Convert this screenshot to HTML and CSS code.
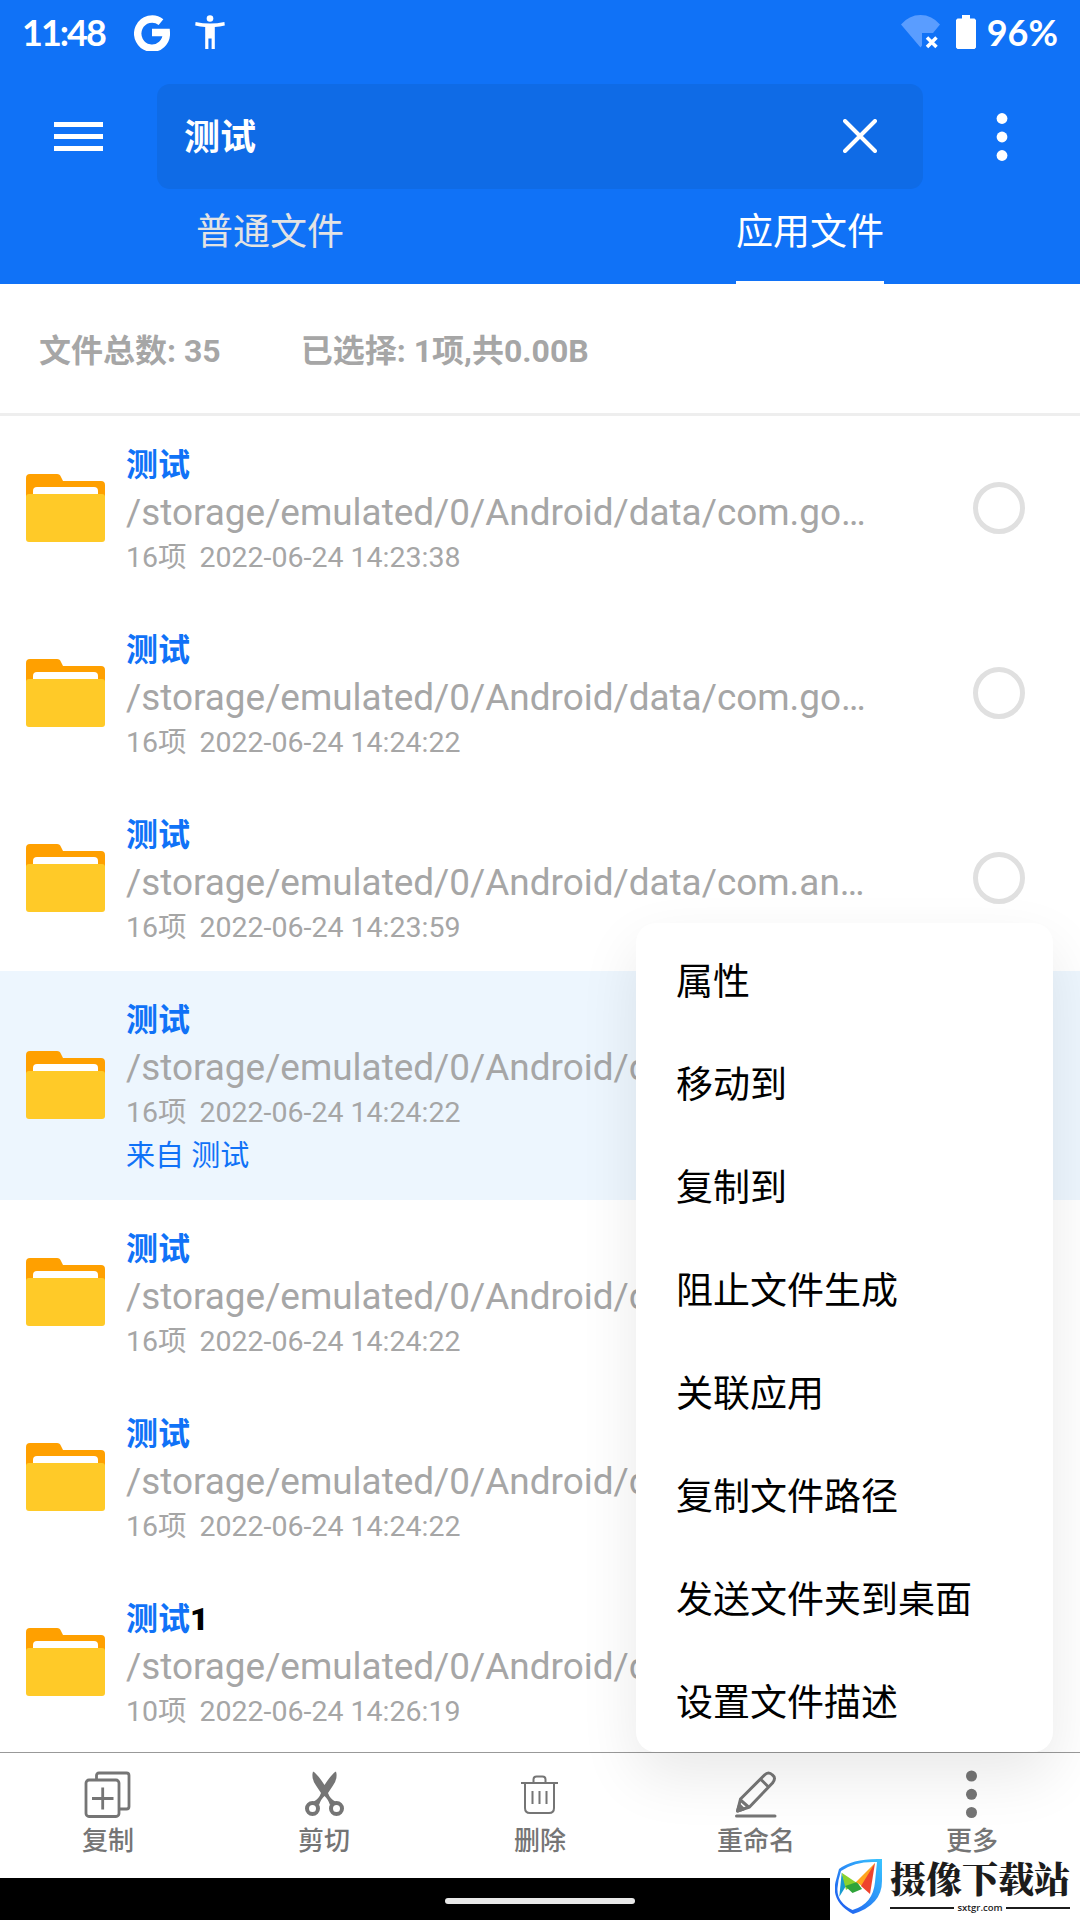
FILE: index.html
```
<!DOCTYPE html>
<html lang="zh-CN">

    <head>

        <meta charset="UTF-8">
        <meta name="viewport" content="width=device-width, initial-scale=1.0">
        <title>文件搜索</title>

        <link rel="stylesheet" href="styles.css">

    </head>

    <body>

        <!-- icon shared by every row -->
        <svg class="sprite">
            <symbol id="folder" viewBox="0 0 79 68">
                <path fill="#ffa000" d="M0 4a4 4 0 0 1 4-4h27q3 0 4 3l2 4h38a4 4 0 0 1 4 4v20H0z"/>
                <path fill="#fff" d="M7 24v-7q0-4 4-4h57q4 0 4 4v7z"/>
                <rect y="20" width="79" height="48" rx="3" fill="#ffca28"/>
            </symbol>
        </svg>

        <header class="app-header">

            <div class="status-bar">
                <span class="time">11:48</span>
                <svg class="google" viewBox="0 0 36 37"><path d="M27 8.2A14.3 14.6 0 1 0 32.3 18.5H18" fill="none" stroke="#fff" stroke-width="7.4"/></svg>
                <svg class="person" viewBox="0 0 30 34" fill="#fff"><circle cx="15" cy="3.5" r="3.3"/><path d="M.6 7q14.4 3 28.8 0l.4 3.400q-5 1.200-10 1.500V34h-3.200V23.500h-3.200V34h-3.200V11.900q-5-.3-10-1.500z"/></svg>
                <div class="status-right">
                    <svg class="wifi" viewBox="0 0 39 34"><path fill="#5a9dff" d="M0 9.5Q8 0 19.500 0T39 9.500l-7 8.500H21v12.500L19.500 32.500z"/><path d="M26 22.500l9.500 9.500m0-9.500L26 32" stroke="#fff" stroke-width="3.500"/></svg>
                    <svg class="battery" viewBox="0 0 20 34" fill="#fff"><path d="M6 0h8v3.500h4.500l1.500 1.500v27.500l-1.500 1.500h-17L0 32.500V5l1.500-1.500H6z"/></svg>
                    <span class="percent">96%</span>
                </div>
            </div>

            <div class="search-bar">
                <svg class="menu-icon" viewBox="0 0 49 29" fill="#fff"><path d="M0 0h49v5H0zM0 12h49v5H0zM0 24h49v5H0z"/></svg>
                <div class="search-box">
                    <span>测试</span>
                    <svg class="clear" viewBox="0 0 34 34"><path d="M2 2l30 30M32 2L2 32" stroke="#fff" stroke-width="4" stroke-linecap="round"/></svg>
                </div>
                <svg class="dots" viewBox="0 0 12 48" fill="#fff"><circle cx="6" cy="5.500" r="5.400"/><circle cx="6" cy="24" r="5.400"/><circle cx="6" cy="42.500" r="5.400"/></svg>
            </div>

            <nav class="tabs">
                <div class="tab"><span>普通文件</span></div>
                <div class="tab active"><span>应用文件</span></div>
            </nav>

        </header>

        <section class="summary">
            <span>文件总数: 35</span>
            <span>已选择: 1项,共0.00B</span>
        </section>

        <main class="file-list">

            <article class="file">
                <svg class="folder"><use href="#folder"/></svg>
                <div class="info">
                    <h2>测试</h2>
                    <p class="path">/storage/emulated/0/Android/data/com.go…</p>
                    <p class="meta"><span>16项</span><span>2022-06-24 14:23:38</span></p>
                </div>
                <i class="check"></i>
            </article>

            <article class="file">
                <svg class="folder"><use href="#folder"/></svg>
                <div class="info">
                    <h2>测试</h2>
                    <p class="path">/storage/emulated/0/Android/data/com.go…</p>
                    <p class="meta"><span>16项</span><span>2022-06-24 14:24:22</span></p>
                </div>
                <i class="check"></i>
            </article>

            <article class="file">
                <svg class="folder"><use href="#folder"/></svg>
                <div class="info">
                    <h2>测试</h2>
                    <p class="path">/storage/emulated/0/Android/data/com.an…</p>
                    <p class="meta"><span>16项</span><span>2022-06-24 14:23:59</span></p>
                </div>
                <i class="check"></i>
            </article>

            <article class="file selected">
                <svg class="folder"><use href="#folder"/></svg>
                <div class="info">
                    <h2>测试</h2>
                    <p class="path">/storage/emulated/0/Android/d</p>
                    <p class="meta"><span>16项</span><span>2022-06-24 14:24:22</span></p>
                    <p class="source">来自 测试</p>
                </div>
            </article>

            <article class="file">
                <svg class="folder"><use href="#folder"/></svg>
                <div class="info">
                    <h2>测试</h2>
                    <p class="path">/storage/emulated/0/Android/d</p>
                    <p class="meta"><span>16项</span><span>2022-06-24 14:24:22</span></p>
                </div>
            </article>

            <article class="file">
                <svg class="folder"><use href="#folder"/></svg>
                <div class="info">
                    <h2>测试</h2>
                    <p class="path">/storage/emulated/0/Android/d</p>
                    <p class="meta"><span>16项</span><span>2022-06-24 14:24:22</span></p>
                </div>
            </article>

            <article class="file">
                <svg class="folder"><use href="#folder"/></svg>
                <div class="info">
                    <h2>测试<b>1</b></h2>
                    <p class="path">/storage/emulated/0/Android/d</p>
                    <p class="meta"><span>10项</span><span>2022-06-24 14:26:19</span></p>
                </div>
            </article>

        </main>

        <footer class="toolbar">
            <div class="tool">
                <svg viewBox="0 0 48 48" fill="none" stroke="#757575" stroke-width="2.800"><rect x="2" y="10" width="33" height="36.500" rx="3"/><path d="M12.500 9V5.500q0-2.500 2.500-2.500h27.500Q45 3 45 5.500v31q0 2.500-2.500 2.500H36M8 28.500h21.500M18.700 17.500v22"/></svg>
                <span>复制</span>
            </div>
            <div class="tool">
                <svg viewBox="0 0 48 48" fill="none" stroke="#757575"><path fill="#757575" stroke="none" d="M13 1.500q4 2 11.500 13.500Q32 3.500 36 1.500q2 7-3 14l-5 7.500q2 6 8 9l-6 3q-2-6-5.500-9-3.500 3-5.500 9l-6-3q6-3 8-9l-5-7.500q-5-7-3-14z"/><circle cx="12.500" cy="38.500" r="5.500" stroke-width="4"/><circle cx="36.500" cy="38.500" r="5.500" stroke-width="4"/></svg>
                <span>剪切</span>
            </div>
            <div class="tool">
                <svg viewBox="0 0 48 48" fill="none" stroke="#757575" stroke-width="2"><path d="M5 13h37M9 13v25q0 5 5 5h19q5 0 5-5V13M17.500 13V9.500q0-3 3-3h6q3 0 3 3V13M16.500 21v13M23.500 21v13M30.500 21v13"/></svg>
                <span>删除</span>
            </div>
            <div class="tool">
                <svg viewBox="0 0 48 48" fill="none" stroke="#757575" stroke-width="3" stroke-linejoin="round"><path d="M5.500 41l3-12L32.500 5q4-4 8 0 4 3 0 8L17.500 37zM28.500 9l8 8M8.500 30l8 7"/><path d="M5.500 41l2-6 4 4z" fill="#757575"/><path d="M4.500 46h38.500" stroke-linecap="round"/></svg>
                <span>重命名</span>
            </div>
            <div class="tool">
                <svg viewBox="0 0 48 48" fill="#757575"><circle cx="23.500" cy="6" r="5.500"/><circle cx="23.500" cy="24.300" r="5.500"/><circle cx="23.500" cy="42.500" r="5.500"/></svg>
                <span>更多</span>
            </div>
        </footer>

        <div class="nav-bar"><i></i></div>

        <ul class="popup">
            <li>属性</li>
            <li>移动到</li>
            <li>复制到</li>
            <li>阻止文件生成</li>
            <li>关联应用</li>
            <li>复制文件路径</li>
            <li>发送文件夹到桌面</li>
            <li>设置文件描述</li>
        </ul>

        <div class="site-mark">
            <svg viewBox="0 0 48 58">
                <defs><linearGradient id="edge" x1="1" y1="0" x2="0" y2="1"><stop offset="0" stop-color="#39c5ff"/><stop offset="1" stop-color="#1c55ee"/></linearGradient></defs>
                <path fill="url(#edge)" fill-rule="evenodd" d="M4 11Q18 0 47 1v22q0 24-29 33Q-4 44 .5 24zM6 13Q3 22 2.500 30q-1 14 15 22Q38 46 40 24L42 4Q20 3 6 13z"/>
                <path fill="#189bd0" d="M6.700 14.700L11 28 4.300 38.700z"/>
                <path fill="#8bd32d" d="M6.700 14.700L22 25 11 32z"/>
                <path fill="#2fa43a" d="M10 28l12-4 5 7-9.500 4z"/>
                <path fill="#ffa51e" d="M21 24L40 5 30 30z"/>
                <path fill="#ee432d" d="M40 5l-5 31-9-8z"/>
            </svg>
            <div class="mark-text">
                <strong>摄像下载站</strong>
                <small>sxtgr.com</small>
            </div>
        </div>

    </body>

</html>
```
FILE: styles.css
```
*
    {
        margin: 0;
        padding: 0;
        box-sizing: border-box;
    }

body
    {
        position: relative;
        width: 1080px;
        height: 1920px;
        overflow: hidden;
        display: flex;
        flex-direction: column;
        background-color: #fff;
        font-family: Roboto, 'Noto Sans CJK SC', sans-serif;
    }

svg
    {
        display: block;
        flex: none;
    }

.sprite
    {
        display: none;
    }

.app-header
    {
        height: 284px;
        background-color: #1072f7;
        color: #fff;
    }

.status-bar
    {
        display: flex;
        align-items: center;
        height: 64px;
        padding: 0 22px;
        font: bold 36px/36px Lato, sans-serif;
    }

.time
    {
        width: 112px;
        letter-spacing: -2px;
    }

.google
    {
        width: 36px;
        height: 37px;
    }

.person
    {
        width: 30px;
        height: 34px;
        margin-left: 25px;
    }

.status-right
    {
        display: flex;
        align-items: center;
        margin-left: auto;
    }

.wifi
    {
        width: 39px;
        height: 34px;
    }

.battery
    {
        width: 20px;
        height: 34px;
        margin: 0 11px 0 16px;
    }

.search-bar
    {
        display: flex;
        align-items: center;
        height: 105px;
        margin-top: 20px;
        padding-left: 54px;
    }

.menu-icon
    {
        width: 49px;
        height: 29px;
        margin-right: 54px;
    }

.search-box
    {
        display: flex;
        align-items: center;
        justify-content: space-between;
        width: 766px;
        height: 105px;
        padding: 0 46px 2px 27px;
        border-radius: 13px;
        background-color: #0f6be6;
        font-size: 36px;
        font-weight: 700;
    }

.search-box span
    {
        padding-bottom: 4px;
    }

.clear
    {
        width: 34px;
        height: 34px;
    }

.dots
    {
        width: 12px;
        height: 48px;
        margin-left: 73px;
    }

.tabs
    {
        display: flex;
        height: 95px;
    }

.tab
    {
        display: flex;
        justify-content: center;
        flex: 1;
        color: #e3e3e3;
        font-size: 37px;
        line-height: 88px;
    }

.tab span
    {
        height: 95px;
    }

.tab.active
    {
        color: #fff;
    }

.tab.active span
    {
        border-bottom: 3px solid #fff;
    }

.summary
    {
        display: flex;
        align-items: center;
        gap: 80px;
        height: 132px;
        padding: 0 0 2px 39px;
        border-bottom: 3px solid #eee;
        color: #a6a6a6;
        font-size: 32px;
        font-weight: 700;
    }

.file-list
    {
        height: 1336px;
        overflow: hidden;
    }

.file
    {
        display: flex;
        align-items: center;
        height: 185px;
        padding: 0 55px 2px 26px;
    }

.file.selected
    {
        height: 229px;
        background-color: #edf6fe;
    }

.folder
    {
        width: 79px;
        height: 68px;
    }

.info
    {
        flex: 1;
        margin-left: 21px;
        padding-top: 5px;
        color: #a6a6a6;
        white-space: nowrap;
    }

.info h2
    {
        color: #1072f7;
        font-size: 32px;
        font-weight: 700;
        line-height: 47px;
    }

.info b
    {
        color: #000;
    }

.path
    {
        font-size: 36.9px;
        line-height: 48px;
    }

.meta
    {
        display: flex;
        gap: 13px;
        font-size: 28.5px;
        line-height: 42px;
    }

.source
    {
        color: #1072f7;
        font-size: 29px;
        line-height: 44px;
    }

.check
    {
        width: 52px;
        height: 52px;
        border: 5px solid #e0e0e0;
        border-radius: 50%;
    }

.toolbar
    {
        display: flex;
        height: 126px;
        border-top: 1px solid #999;
    }

.tool
    {
        display: flex;
        flex-direction: column;
        align-items: center;
        flex: 1;
        padding-top: 17px;
        color: #757575;
        font-size: 26px;
        font-weight: 500;
        line-height: 30px;
    }

.tool svg
    {
        width: 48px;
        height: 48px;
        margin-bottom: 8px;
    }

.nav-bar
    {
        display: flex;
        align-items: center;
        justify-content: center;
        height: 42px;
        padding-top: 3px;
        background-color: #000;
    }

.nav-bar i
    {
        width: 190px;
        height: 6px;
        border-radius: 3px;
        background-color: #e8e8e8;
    }

/* menu opened from the last toolbar button */
.popup
    {
        position: absolute;
        left: 636px;
        top: 923px;
        width: 417px;
        height: 829px;
        padding: 8px 0 0 40px;
        border-radius: 20px;
        background-color: #fff;
        box-shadow: 0 24px 60px rgba(0, 0, 0, 0.09);
        list-style: none;
        color: #000;
        font-size: 37px;
        line-height: 103px;
    }

.site-mark
    {
        position: absolute;
        left: 830px;
        top: 1858px;
        display: flex;
        width: 250px;
        height: 62px;
        padding-left: 5px;
        background-color: #fff;
    }

.site-mark svg
    {
        width: 48px;
        height: 58px;
        margin-right: 7px;
    }

.mark-text
    {
        width: 180px;
        color: #1c1c1c;
    }

.mark-text strong
    {
        display: block;
        font: 900 36px/39px 'Noto Serif CJK SC', 'Noto Sans CJK SC', serif;
        white-space: nowrap;
    }

.mark-text small
    {
        display: flex;
        align-items: center;
        gap: 3px;
        margin-top: 4px;
        font: 600 9.5px/13px 'Open Sans', sans-serif;
    }

.mark-text small::before,
.mark-text small::after
    {
        content: '';
        flex: 1;
        height: 2px;
        background-color: #1c1c1c;
    }
```
